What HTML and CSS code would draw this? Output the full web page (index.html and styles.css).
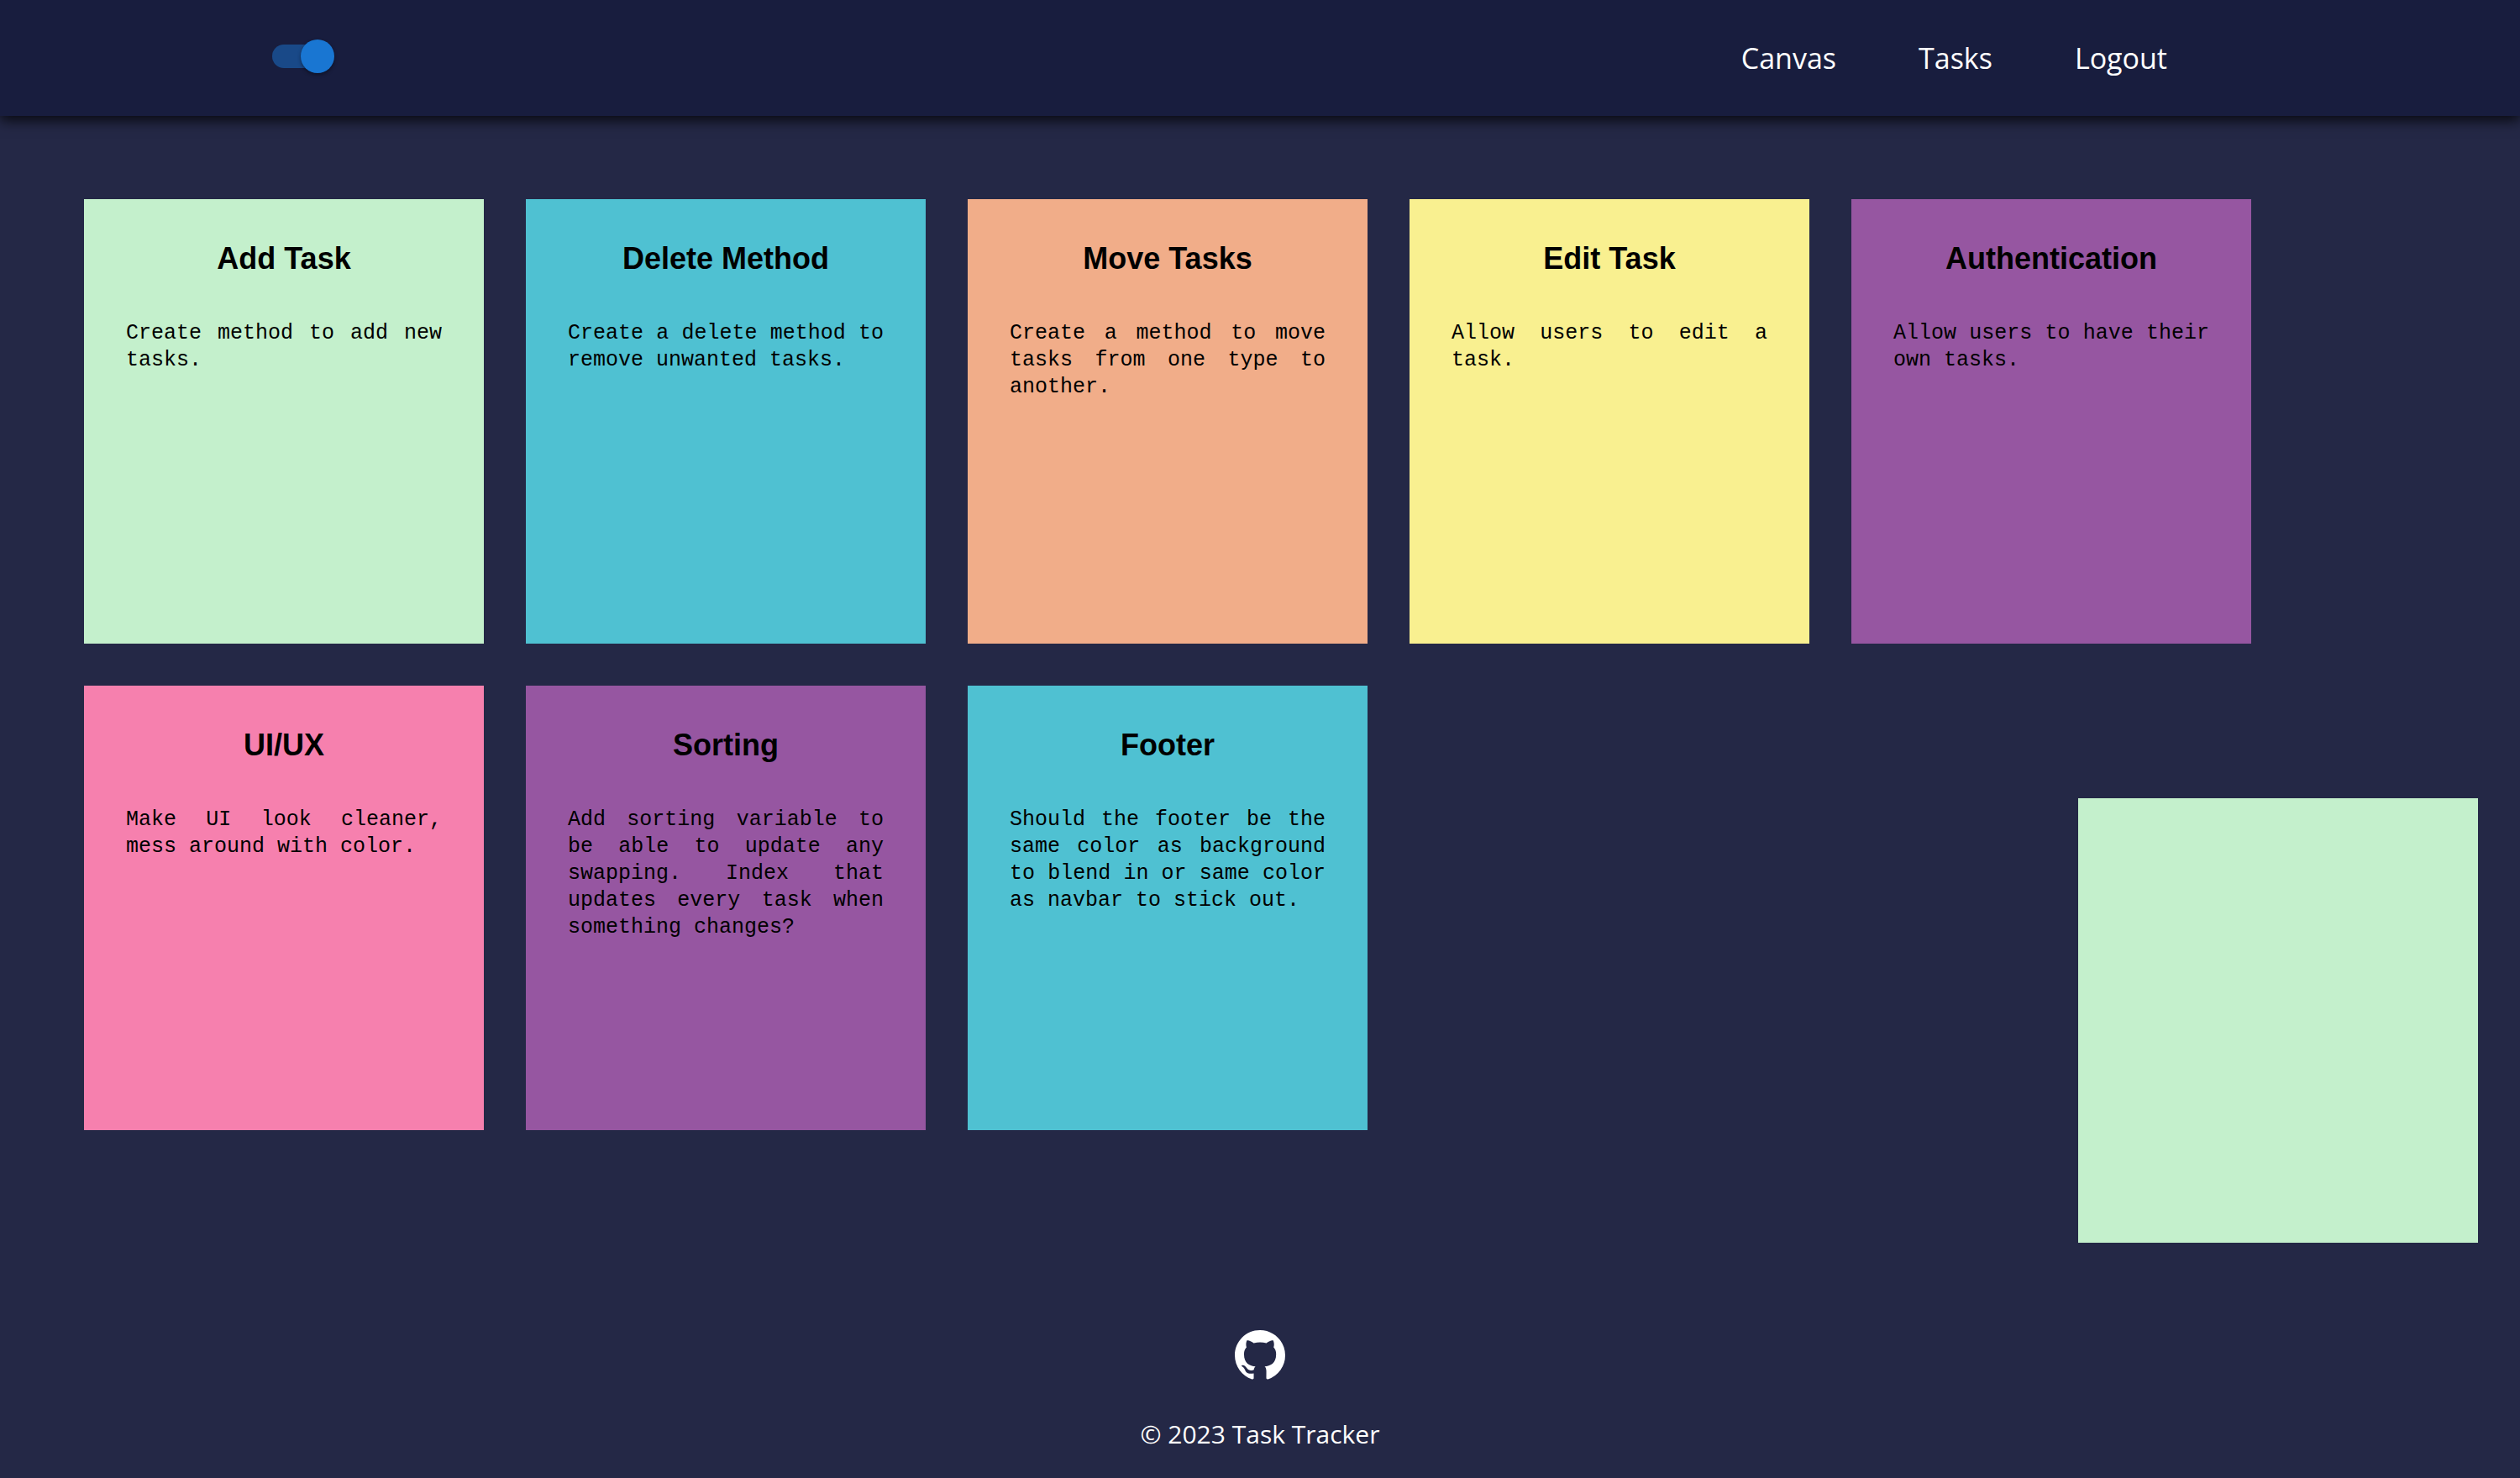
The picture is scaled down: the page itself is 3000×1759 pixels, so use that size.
FILE: index.html
```html
<!DOCTYPE html>
<html lang="en">
<head>
  <meta charset="utf-8">
  <meta name="viewport" content="width=device-width, initial-scale=1">
  <title>Task Tracker</title>
  <link rel="stylesheet" href="styles.css">
</head>
<body>
  <header class="navbar">
    <input class="switch" type="checkbox" role="switch" aria-label="Dark mode" checked>
    <nav class="nav-links" aria-label="Main">
      <a href="#canvas">Canvas</a>
      <a href="#tasks">Tasks</a>
      <a href="#logout">Logout</a>
    </nav>
  </header>

  <main class="board">
    <article class="note green">
      <h2>Add Task</h2>
      <p>Create method to add new tasks.</p>
    </article>
    <article class="note teal">
      <h2>Delete Method</h2>
      <p>Create a delete method to remove unwanted tasks.</p>
    </article>
    <article class="note peach">
      <h2>Move Tasks</h2>
      <p>Create a method to move tasks from one type to another.</p>
    </article>
    <article class="note yellow">
      <h2>Edit Task</h2>
      <p>Allow users to edit a task.</p>
    </article>
    <article class="note purple">
      <h2>Authentication</h2>
      <p>Allow users to have their own tasks.</p>
    </article>
    <article class="note pink">
      <h2>UI/UX</h2>
      <p>Make UI look cleaner, mess around with color.</p>
    </article>
    <article class="note purple">
      <h2>Sorting</h2>
      <p>Add sorting variable to be able to update any swapping. Index that updates every task when something changes?</p>
    </article>
    <article class="note teal">
      <h2>Footer</h2>
      <p>Should the footer be the same color as background to blend in or same color as navbar to stick out.</p>
    </article>
  </main>

  <button class="note green new-note" type="button" aria-label="New task"></button>

  <footer class="footer">
    <a class="github" href="#github" aria-label="GitHub">
      <svg viewBox="0 0 16 16" aria-hidden="true"><path fill="currentColor" d="M8 0C3.58 0 0 3.58 0 8c0 3.54 2.29 6.53 5.47 7.59.4.07.55-.17.55-.38 0-.19-.01-.82-.01-1.49-2.01.37-2.53-.49-2.69-.94-.09-.23-.48-.94-.82-1.13-.28-.15-.68-.52-.01-.53.63-.01 1.08.58 1.23.82.72 1.21 1.87.87 2.33.66.07-.52.28-.87.51-1.07-1.78-.2-3.64-.89-3.64-3.95 0-.87.31-1.59.82-2.15-.08-.2-.36-1.02.08-2.12 0 0 .67-.21 2.2.82.64-.18 1.32-.27 2-.27s1.36.09 2 .27c1.53-1.04 2.2-.82 2.2-.82.44 1.1.16 1.92.08 2.12.51.56.82 1.27.82 2.15 0 3.07-1.87 3.75-3.65 3.95.29.25.54.73.54 1.48 0 1.07-.01 1.93-.01 2.2 0 .21.15.46.55.38A8.01 8.01 0 0 0 16 8c0-4.42-3.58-8-8-8"/></svg>
    </a>
    <p>© 2023 Task Tracker</p>
  </footer>
</body>
</html>
```

FILE: styles.css
```css
* {
  box-sizing: border-box;
}

body {
  margin: 0;
  min-height: 100vh;
  display: flex;
  flex-direction: column;
  background: #242846;
  color: #fff;
  font-family: "Segoe UI", "Open Sans", "Noto Sans", sans-serif;
}

.navbar {
  display: flex;
  align-items: center;
  justify-content: space-between;
  height: 138px;
  padding: 0 14% 4px 10%;
  background: #181d3e;
  box-shadow: 0 5px 15px rgba(0, 0, 0, 0.8);
}

/* Toggle: translucent track with a raised round thumb */
.switch {
  appearance: none;
  display: flex;
  align-items: center;
  justify-content: flex-end;
  width: 68px;
  height: 28px;
  margin: 0 24px;
  border-radius: 14px;
  background: rgba(25, 118, 210, 0.5);
  cursor: pointer;
}

.switch::before {
  content: "";
  flex: none;
  width: 40px;
  height: 40px;
  margin-right: -6px;
  border-radius: 50%;
  background: #1976d2;
  box-shadow: 0 2px 4px rgba(0, 0, 0, 0.4);
}

.switch:not(:checked) {
  justify-content: flex-start;
}

.nav-links {
  display: flex;
  gap: 98px;
  padding-top: 4px;
  font-size: 34px;
  line-height: 48px;
}

.nav-links a {
  color: inherit;
  text-decoration: none;
}

.board {
  display: flex;
  flex-wrap: wrap;
  gap: 50px;
  padding: 99px 100px 50px;
}

.note {
  width: 476px;
  min-height: 529px;
  padding: 50px;
  border: 0;
  color: #000;
}

.note h2 {
  margin: 0 0 52px;
  font: bold 36px/42px "Liberation Sans", Arial, sans-serif;
  text-align: center;
}

.note p {
  margin: 0;
  font: 25px/32px "Liberation Mono", monospace;
  text-align: justify;
}

.green { background: #c4f0cc; }
.teal { background: #4fc1d2; }
.peach { background: #f1ad89; }
.yellow { background: #f9f090; }
.purple { background: #9656a1; }
.pink { background: #f680ae; }

/* Blank note pinned over the board's lower right corner */
.new-note {
  position: fixed;
  right: 50px;
  bottom: 280px;
  cursor: pointer;
}

.footer {
  display: flex;
  flex-direction: column;
  align-items: center;
  gap: 42px;
  margin-top: auto;
  padding-bottom: 30px;
}

.github {
  color: inherit;
}

.github svg {
  display: block;
  width: 60px;
  height: 60px;
}

.footer p {
  margin: 0;
  font-size: 30px;
  line-height: 44px;
}
```
